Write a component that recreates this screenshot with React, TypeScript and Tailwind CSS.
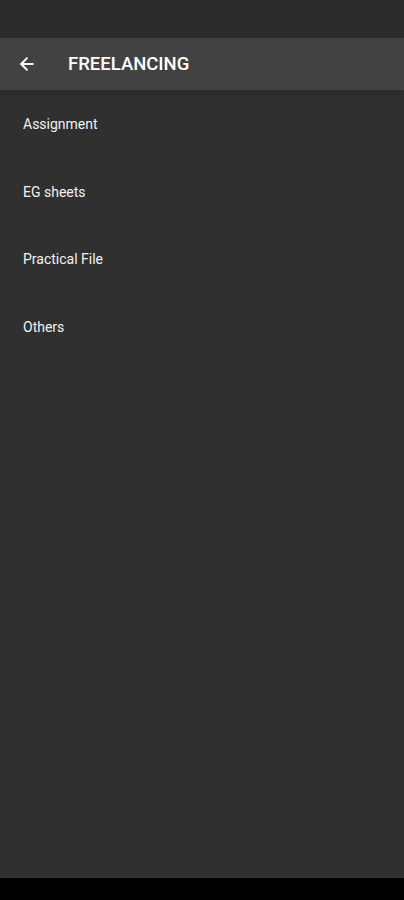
import { ArrowLeft } from "lucide-react";

const items = ["Assignment", "EG sheets", "Practical File", "Others"];

export default function App() {
	return (
		<div className="w-[404px] h-[900px] flex flex-col bg-[#303030] font-['Roboto',sans-serif] text-white">
			{/* status bar */}
			<div className="h-[38px] bg-[#2c2c2c]" />

			{/* app bar */}
			<div className="h-[52px] bg-[#424242] flex items-center shadow-md">
				<button className="ml-[16px] w-[22px] h-[22px] flex items-center justify-center">
					<ArrowLeft size={20} strokeWidth={2.2} />
				</button>
				<h1 className="ml-[30px] mt-[2px] text-[18.5px] font-medium">FREELANCING</h1>
			</div>

			{/* list */}
			<div className="flex-1 pt-[1px]">
				{items.map((item) => (
					<div key={item} className="h-[67.5px] flex items-center px-[23px]">
						<span className="text-[14px] text-[#f2f2f2]">{item}</span>
					</div>
				))}
			</div>

			{/* nav bar */}
			<div className="h-[22px] bg-black" />
		</div>
	);
}
